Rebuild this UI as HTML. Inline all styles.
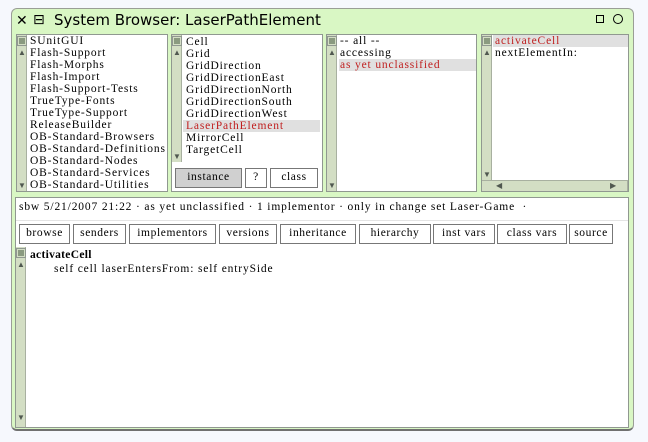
<!DOCTYPE html><html><head><style>
body{margin:0;width:648px;height:442px;background:#f6f8fd;position:relative;overflow:hidden;font-family:"Liberation Serif","DejaVu Serif",serif;}
.a{position:absolute;box-sizing:border-box}
.win{left:11px;top:8px;width:623px;height:423px;background:#d9f7c4;border:1px solid #9a9e96;border-radius:6px;border-bottom:2px solid #707070}
.pane{background:#fff;border:1px solid #909890}
.sb{background:#d3dec4;border-right:1px solid #a8b0a0}
.t{font-size:11.5px;line-height:12px;white-space:pre;letter-spacing:0.85px}
.sel{background:#e0e0e0;color:#c02020}
.btn{border:1px solid #777;background:#fff;font-size:11.5px;text-align:center;line-height:17px;letter-spacing:0.6px;white-space:nowrap}
.sq{width:8px;height:8px;background:#8a9a80;border:1px solid #d3dec4;outline:1px solid #909890}
.ar{font-size:8px;color:#505850;line-height:8px}
</style></head><body>
<div class="a win"></div>
<div class="a" style="left:16px;top:13px;font:14px 'DejaVu Sans',sans-serif">✕</div>
<div class="a" style="left:33px;top:12px;font:14px 'DejaVu Sans',sans-serif">⊟</div>
<div class="a" style="left:54px;top:11px;font:15px 'DejaVu Sans','Liberation Sans',sans-serif">System Browser: LaserPathElement</div>
<div class="a" style="left:596px;top:15px;width:8px;height:8px;border:1.5px solid #000"></div>
<div class="a" style="left:613px;top:14px;width:10px;height:10px;border:1.5px solid #000;border-radius:50%"></div>

<div class="a pane" style="left:16px;top:34px;width:152px;height:158px"></div>
<div class="a sb" style="left:17px;top:35px;width:10px;height:156px"></div>
<div class="a sq" style="left:18px;top:37px"></div>
<div class="a ar" style="left:18px;top:49px">▲</div>
<div class="a ar" style="left:18px;top:182px">▼</div>
<div class="a t" style="left:30px;top:35px">SUnitGUI
Flash-Support
Flash-Morphs
Flash-Import
Flash-Support-Tests
TrueType-Fonts
TrueType-Support
ReleaseBuilder
OB-Standard-Browsers
OB-Standard-Definitions
OB-Standard-Nodes
OB-Standard-Services
OB-Standard-Utilities</div>

<div class="a pane" style="left:171px;top:34px;width:152px;height:158px"></div>
<div class="a sb" style="left:172px;top:35px;width:10px;height:127px"></div>
<div class="a sq" style="left:173px;top:37px"></div>
<div class="a ar" style="left:173px;top:49px">▲</div>
<div class="a ar" style="left:173px;top:153px">▼</div>
<div class="a sel" style="left:183px;top:120px;width:137px;height:12px"></div>
<div class="a t" style="left:186px;top:36px">Cell
Grid
GridDirection
GridDirectionEast
GridDirectionNorth
GridDirectionSouth
GridDirectionWest
<span style="color:#c02020">LaserPathElement</span>
MirrorCell
TargetCell</div>
<div class="a btn" style="left:175px;top:168px;width:67px;height:20px;background:#d0d0d0">instance</div>
<div class="a btn" style="left:245px;top:168px;width:22px;height:20px">?</div>
<div class="a btn" style="left:270px;top:168px;width:48px;height:20px">class</div>

<div class="a pane" style="left:326px;top:34px;width:151px;height:158px"></div>
<div class="a sb" style="left:327px;top:35px;width:10px;height:156px"></div>
<div class="a sq" style="left:328px;top:37px"></div>
<div class="a ar" style="left:328px;top:49px">▲</div>
<div class="a ar" style="left:328px;top:182px">▼</div>
<div class="a sel" style="left:339px;top:59px;width:137px;height:12px"></div>
<div class="a t" style="left:340px;top:35px">-- all --
accessing
<span style="color:#c02020">as yet unclassified</span></div>

<div class="a pane" style="left:481px;top:34px;width:148px;height:158px"></div>
<div class="a sb" style="left:482px;top:35px;width:10px;height:145px"></div>
<div class="a sb" style="left:482px;top:180px;width:146px;height:11px;border-top:1px solid #a8b0a0"></div>
<div class="a sq" style="left:483px;top:37px"></div>
<div class="a ar" style="left:483px;top:49px">▲</div>
<div class="a ar" style="left:483px;top:171px">▼</div>
<div class="a ar" style="left:496px;top:182px">◀</div>
<div class="a ar" style="left:610px;top:182px">▶</div>
<div class="a sel" style="left:493px;top:35px;width:135px;height:12px"></div>
<div class="a t" style="left:495px;top:35px"><span style="color:#c02020">activateCell</span>
nextElementIn:</div>

<div class="a pane" style="left:15px;top:197px;width:614px;height:231px"></div>
<div class="a t" style="left:19px;top:201px">sbw 5/21/2007 21:22 · as yet unclassified · 1 implementor · only in change set Laser-Game  ·</div>
<div class="a" style="left:16px;top:220px;width:612px;height:1px;background:#e4e4e4"></div>
<div class="a btn" style="left:19px;top:224px;width:51px;height:20px">browse</div>
<div class="a btn" style="left:73px;top:224px;width:53px;height:20px">senders</div>
<div class="a btn" style="left:129px;top:224px;width:87px;height:20px">implementors</div>
<div class="a btn" style="left:219px;top:224px;width:58px;height:20px">versions</div>
<div class="a btn" style="left:280px;top:224px;width:76px;height:20px">inheritance</div>
<div class="a btn" style="left:359px;top:224px;width:72px;height:20px">hierarchy</div>
<div class="a btn" style="left:433px;top:224px;width:62px;height:20px">inst vars</div>
<div class="a btn" style="left:497px;top:224px;width:70px;height:20px">class vars</div>
<div class="a btn" style="left:569px;top:224px;width:44px;height:20px">source</div>
<div class="a sb" style="left:16px;top:247px;width:10px;height:180px"></div>
<div class="a sq" style="left:17px;top:249px"></div>
<div class="a ar" style="left:17px;top:261px">▲</div>
<div class="a ar" style="left:17px;top:414px">▼</div>
<div class="a t" style="left:30px;top:249px;font-weight:bold;letter-spacing:0.3px">activateCell</div>
<div class="a t" style="left:54px;top:263px">self cell laserEntersFrom: self entrySide</div>
</body></html>
